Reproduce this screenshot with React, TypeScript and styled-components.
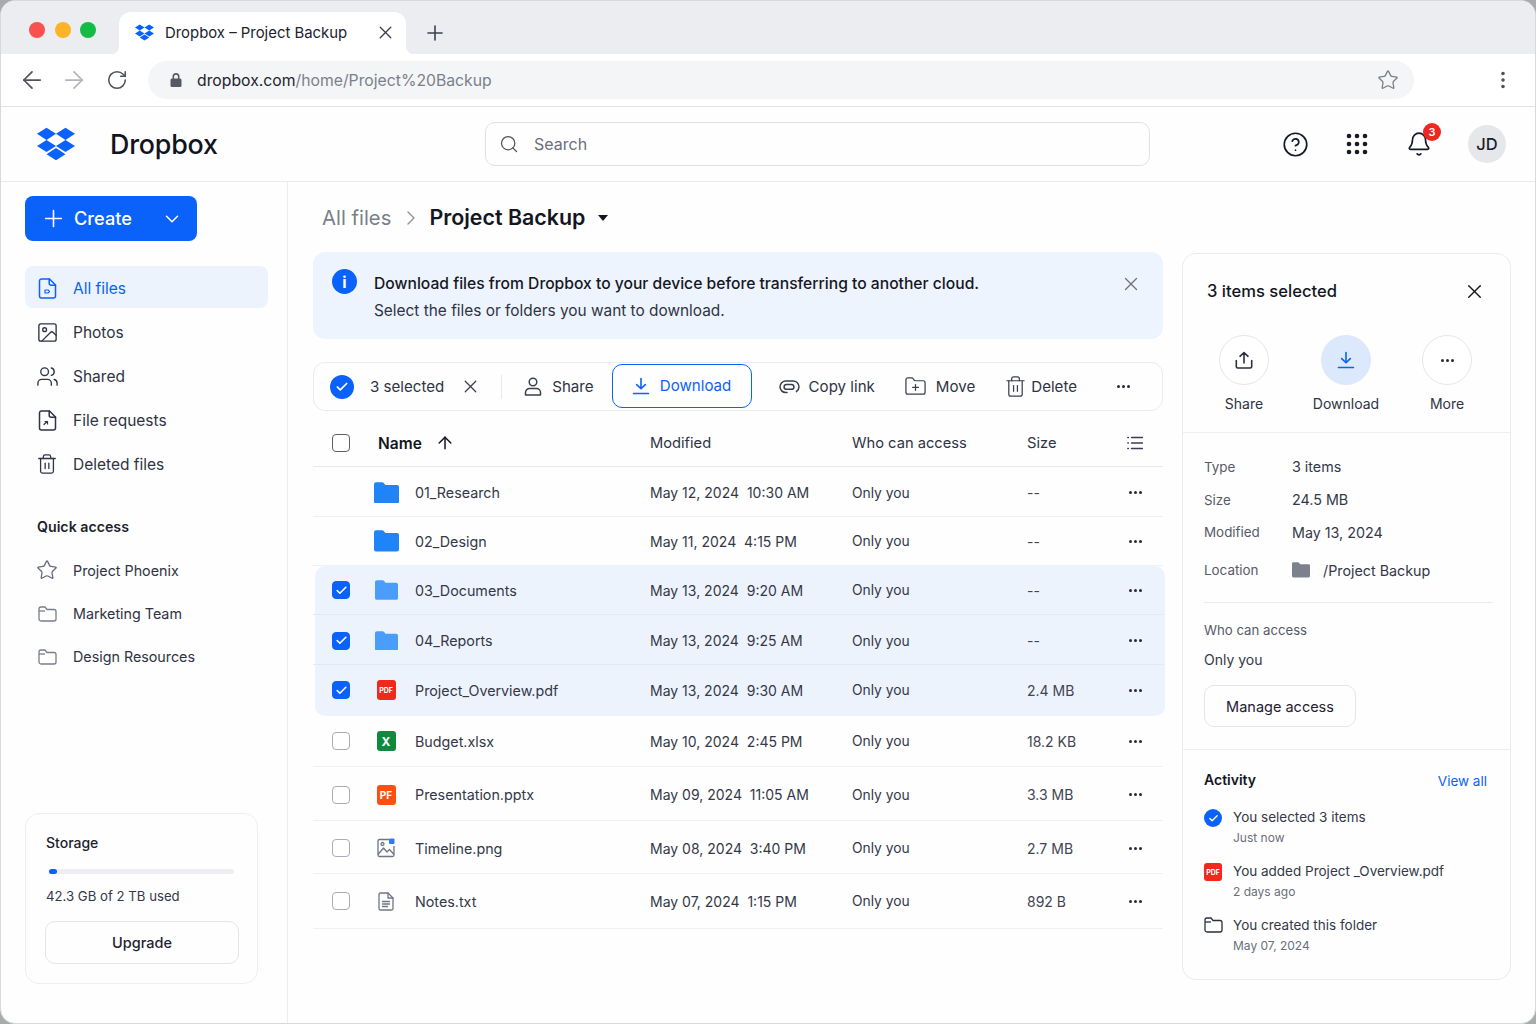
import React from 'react'
import styled, { createGlobalStyle } from 'styled-components'
import {
  ArrowLeft,
  ArrowRight,
  ArrowUp,
  Bell,
  Check,
  ChevronDown,
  ChevronRight,
  CircleHelp,
  FolderPlus,
  Image,
  Plus,
  RotateCw,
  Search,
  Star,
  Trash2,
  Users,
  X,
} from 'lucide-react'

const GlobalStyle = createGlobalStyle`
  html, body { margin: 0; padding: 0; background: #a9aaac; }
  * { box-sizing: border-box; }
  svg { flex: none; }
  body { font-family: Inter, "Liberation Sans", sans-serif; color: #2b2f3f; }
`

const Win = styled.div`
  width: 1536px;
  height: 1024px;
  background: #fefefe;
  border: 1px solid #d8d9dd;
  border-radius: 15px;
  overflow: hidden;
  display: flex;
  flex-direction: column;
`

const TabStrip = styled.div`
  height: 53px;
  flex: none;
  background: #ecedf0;
  display: flex;
  align-items: flex-end;
  padding-left: 28px;
`

const Lights = styled.div`
  display: flex;
  gap: 9.5px;
  align-self: flex-start;
  margin-top: 21px;
  width: 90px;
`

const Light = styled.span<{ $c: string }>`
  width: 16px;
  height: 16px;
  border-radius: 50%;
  background: ${p => p.$c};
`

const Tab = styled.div`
  position: relative;
  width: 287px;
  height: 42px;
  background: #fff;
  border-radius: 12px 12px 0 0;
  display: flex;
  align-items: center;
  padding: 0 10px 2px 16px;
  font-size: 14.9px;
  color: #20232e;
  &::before, &::after {
    content: '';
    position: absolute;
    bottom: 0;
    width: 8px;
    height: 8px;
  }
  &::before { left: -8px; background: radial-gradient(circle at 0 0, transparent 8px, #fff 8.5px); }
  &::after { right: -8px; background: radial-gradient(circle at 100% 0, transparent 8px, #fff 8.5px); }
`

const TabTitle = styled.span`
  margin-left: 11px;
  padding-top: 2px;
  flex: 1;
`

const NewTab = styled.div`
  margin: 0 0 9px 17px;
  display: flex;
  color: #3c404c;
`

const AddressRow = styled.div`
  height: 53px;
  flex: none;
  background: #fff;
  border-bottom: 1px solid #e2e3e7;
  display: flex;
  align-items: center;
  padding-left: 17px;
`

const NavGlyph = styled.div<{ $mr: number; $c?: string }>`
  display: flex;
  margin-right: ${p => p.$mr}px;
  color: ${p => p.$c ?? '#50535e'};
`

const AddressPill = styled.div`
  width: 1266px;
  height: 38px;
  flex: none;
  margin-right: 87px;
  border-radius: 19px;
  background: #f4f5f7;
  display: flex;
  align-items: center;
  padding: 0 15px 0 21px;
  font-size: 15.75px;
  color: #7b7f8b;
`

const Domain = styled.span`
  color: #1f2230;
  margin-left: 14px;
  padding-top: 1px;
`

const Path = styled.span`
  flex: 1;
  padding-top: 1px;
`

const AppHeader = styled.header`
  height: 75px;
  flex: none;
  border-bottom: 1px solid #e9eaed;
  display: flex;
  align-items: center;
  padding-left: 36px;
`

const Brand = styled.div`
  width: 448px;
  display: flex;
  align-items: center;
  gap: 35px;
  font-size: 26.8px;
  font-weight: 550;
  color: #11131d;
  letter-spacing: -0.2px;
`

const SearchBox = styled.div`
  width: 665px;
  height: 44px;
  flex: none;
  border: 1px solid #dfe1e7;
  border-radius: 10px;
  display: flex;
  align-items: center;
  gap: 15px;
  padding-left: 13px;
  font-size: 16px;
  color: #6a6e7a;
`

const HeaderTools = styled.div`
  display: flex;
  align-items: center;
  margin-left: 132px;
  color: #161927;
`

const HeaderIcon = styled.div<{ $mr: number }>`
  position: relative;
  display: flex;
  margin-right: ${p => p.$mr}px;
`

const Badge = styled.span`
  position: absolute;
  top: -8px;
  right: -9px;
  width: 18px;
  height: 18px;
  border-radius: 50%;
  background: #ee2722;
  color: #fff;
  font-size: 11px;
  font-weight: 600;
  display: flex;
  align-items: center;
  justify-content: center;
`

const Avatar = styled.div`
  width: 38px;
  height: 38px;
  border-radius: 50%;
  background: #e6e7eb;
  font-size: 16.5px;
  font-weight: 500;
  color: #1b1e2b;
  display: flex;
  align-items: center;
  justify-content: center;
`

const Body = styled.div`
  flex: 1;
  display: flex;
  min-height: 0;
`

const Sidebar = styled.aside`
  width: 287px;
  flex: none;
  border-right: 1px solid #ecedf0;
  padding: 14px 19px 39px 24px;
  display: flex;
  flex-direction: column;
`

const CreateButton = styled.div`
  width: 172px;
  height: 45px;
  background: #0a62fb;
  border-radius: 8px;
  color: #fff;
  font-size: 18.2px;
  font-weight: 500;
  display: flex;
  align-items: center;
  padding-left: 15px;
  margin-bottom: 25px;
`

const CreateLabel = styled.span`
  margin: 0 0 2px 7px;
  flex: 1;
`

const CreateCaret = styled.span`
  display: flex;
  margin-right: 14px;
`

const NavItem = styled.div<{ $active?: boolean; $h?: number; $pt?: number; $small?: boolean }>`
  height: ${p => p.$h ?? 44}px;
  padding: ${p => p.$pt ?? 0}px 0 0 12px;
  display: flex;
  align-items: center;
  gap: 16px;
  border-radius: 8px;
  font-size: ${p => (p.$small ? 14.3 : 15.5)}px;
  color: ${p => (p.$active ? '#0a62fb' : '#2f3343')};
  background: ${p => (p.$active ? '#edf3fd' : 'transparent')};
`

const NavList = styled.nav`
  display: flex;
  flex-direction: column;
`

const NavIcon = styled.span<{ $c?: string }>`
  width: 20px;
  display: flex;
  justify-content: center;
  color: ${p => p.$c ?? 'inherit'};
`

const SideTitle = styled.div`
  font-size: 14.2px;
  font-weight: 600;
  color: #1c1f2c;
  margin: 32px 0 13px 12px;
`

const StorageCard = styled.div`
  margin-top: auto;
  width: 233px;
  height: 171px;
  border: 1px solid #eceef1;
  border-radius: 14px;
  padding: 20px 19px 0 20px;
  display: flex;
  flex-direction: column;
`

const StorageTitle = styled.div`
  font-size: 14px;
  font-weight: 500;
  color: #1c1f2c;
`

const Track = styled.div`
  height: 5px;
  margin: 18px 4px 0 3px;
  border-radius: 3px;
  background: #eceef2;
`

const TrackFill = styled.div`
  height: 5px;
  border-radius: 3px;
  background: #0a62fb;
`

const StorageText = styled.div`
  font-size: 13.2px;
  color: #343847;
  margin-top: 14px;
`

const OutlineButton = styled.div<{ $w: number; $h: number; $weight?: number }>`
  width: ${p => p.$w}px;
  height: ${p => p.$h}px;
  border: 1px solid #e3e5ea;
  border-radius: 10px;
  display: flex;
  align-items: center;
  justify-content: center;
  font-size: 14.5px;
  font-weight: ${p => p.$weight ?? 400};
  color: #1f2230;
`

const UpgradeWrap = styled.div`
  margin: 17px 0 0 -1px;
`

const Main = styled.main`
  flex: 1;
  padding-left: 25px;
  display: flex;
  flex-direction: column;
`

const Crumbs = styled.div`
  height: 70px;
  flex: none;
  display: flex;
  align-items: center;
  padding: 0 0 0 9px;
`

const CrumbRoot = styled.span`
  font-size: 20.3px;
  color: #7a7e8a;
`

const CrumbSep = styled.span`
  display: flex;
  color: #8e919c;
  margin: 2px 6px 0 8px;
`

const CrumbCurrent = styled.span`
  font-size: 21.4px;
  font-weight: 600;
  color: #14161f;
`

const CrumbCaret = styled.span`
  width: 0;
  height: 0;
  margin: 2px 0 0 13px;
  border-left: 5px solid transparent;
  border-right: 5px solid transparent;
  border-top: 6px solid #14161f;
`

const Columns = styled.div`
  display: flex;
  align-items: flex-start;
  gap: 19px;
`

const Content = styled.section`
  width: 850px;
  flex: none;
`

const Banner = styled.div`
  height: 87px;
  background: #eef4fd;
  border-radius: 12px;
  display: flex;
  padding: 17px 21px 0 19px;
`

const InfoDot = styled.div`
  width: 25px;
  height: 25px;
  border-radius: 50%;
  background: #0a62fb;
  color: #fff;
  flex: none;
  font-size: 16px;
  font-weight: 700;
  display: flex;
  align-items: center;
  justify-content: center;
`

const BannerText = styled.div`
  flex: 1;
  margin-left: 17px;
  font-size: 15.4px;
  line-height: 27px;
  margin-top: 1px;
  color: #2f3343;
`

const BannerLead = styled.div`
  font-size: 15.66px;
  font-weight: 500;
  color: #151823;
`

const BannerClose = styled.div`
  display: flex;
  color: #6c707c;
  height: 22px;
  margin-top: 4px;
`

const Toolbar = styled.div`
  height: 49px;
  margin-top: 23px;
  border: 1px solid #e9ebee;
  border-radius: 12px;
  display: flex;
  align-items: center;
  padding-left: 16px;
  font-size: 15.1px;
  color: #2f3343;
`

const RoundCheck = styled.div<{ $size: number }>`
  width: ${p => p.$size}px;
  height: ${p => p.$size}px;
  flex: none;
  border-radius: 50%;
  background: #0a62fb;
  color: #fff;
  display: flex;
  align-items: center;
  justify-content: center;
`

const ToolText = styled.span<{ $ml: number }>`
  margin-left: ${p => p.$ml}px;
`

const ToolDivider = styled.span`
  width: 1px;
  height: 24px;
  background: #e6e8ec;
  margin: 0 22px 0 20px;
`

const ToolAction = styled.div<{ $ml?: number; $gap: number }>`
  display: flex;
  align-items: center;
  gap: ${p => p.$gap}px;
  margin-left: ${p => p.$ml ?? 0}px;
`

const ToolIcon = styled.span<{ $ml?: number }>`
  display: flex;
  color: #3b3f4d;
  margin-left: ${p => p.$ml ?? 0}px;
`

const DownloadAction = styled.div`
  width: 140px;
  height: 44px;
  margin: 0 0 2px 18px;
  border: 1.5px solid #0a62fb;
  border-radius: 10px;
  color: #0a62fb;
  display: flex;
  align-items: center;
  justify-content: center;
  gap: 10px;
`

const Dots = styled.span<{ $ml?: number; $c?: string }>`
  display: flex;
  gap: 2px;
  margin-left: ${p => p.$ml ?? 0}px;
  & > i {
    width: 3px;
    height: 3px;
    border-radius: 50%;
    background: ${p => p.$c ?? '#262a38'};
  }
`

const columns = '56px 46px 235px 202px 175px 90px 36px'

const HeadRow = styled.div`
  height: 47px;
  margin-top: 9px;
  display: grid;
  grid-template-columns: ${columns};
  align-items: center;
  border-bottom: 1px solid #e6e8ec;
  font-size: 14.7px;
  color: #2f3343;
`

const NameHead = styled.div`
  grid-column: 2 / 4;
  padding-left: 9px;
  display: flex;
  align-items: center;
  gap: 13px;
  font-weight: 600;
  font-size: 15.5px;
  color: #14161f;
`

const CheckCell = styled.div`
  display: flex;
  justify-content: center;
`

const CheckBox = styled.span<{ $on?: boolean; $dark?: boolean }>`
  width: 18px;
  height: 18px;
  border-radius: 4px;
  border: 1.5px solid ${p => (p.$on ? '#0a62fb' : p.$dark ? '#5b5f6c' : '#a9adb9')};
  background: ${p => (p.$on ? '#0a62fb' : '#fff')};
  color: #fff;
  display: flex;
  align-items: center;
  justify-content: center;
`

const SelectedGroup = styled.div`
  margin: 0 -2px 0 2px;
  background: #edf3fd;
  border-radius: 10px;
`

const Row = styled.div<{ $h: number; $nudge?: boolean; $selected?: boolean; $last?: boolean }>`
  height: ${p => p.$h}px;
  padding-top: ${p => (p.$nudge ? 2 : 0)}px;
  display: grid;
  grid-template-columns: ${columns};
  align-items: center;
  font-size: 14.3px;
  color: #343847;
  border-bottom: 1px solid ${p => (p.$selected ? (p.$last ? 'transparent' : '#e0e9f8') : '#eff0f3')};
  margin: ${p => (p.$selected ? '0 2px 0 -2px' : '0')};
`

const IconCell = styled.div`
  display: flex;
  justify-content: center;
  padding-right: 12px;
`

const FileBadge = styled.span<{ $bg: string; $size: number; $w?: number; $h?: number }>`
  width: ${p => p.$w ?? 19}px;
  height: ${p => p.$h ?? 20}px;
  border-radius: 3px;
  background: ${p => p.$bg};
  color: #fff;
  font-size: ${p => p.$size}px;
  font-weight: 700;
  flex: none;
  display: flex;
  align-items: center;
  justify-content: center;
`

const DateCell = styled.div`
  font-size: 14px;
  white-space: pre;
`

const AccessCell = styled.div`
  font-size: 13.8px;
`

const SizeCell = styled.div`
  font-size: 14px;
  color: #414553;
`

const RowDots = styled.div`
  display: flex;
  justify-content: center;
`

const Panel = styled.aside`
  width: 329px;
  height: 727px;
  flex: none;
  margin-top: 1px;
  border: 1px solid #e9ebee;
  border-radius: 14px;
  font-size: 14px;
  color: #343847;
`

const PanelHead = styled.div`
  height: 76px;
  display: flex;
  align-items: center;
  justify-content: space-between;
  padding: 0 24px 2px 24px;
  font-size: 16.6px;
  font-weight: 500;
  color: #14161f;
  margin-bottom: 5px;
`

const QuickActions = styled.div`
  height: 98px;
  display: grid;
  grid-template-columns: 112px 92px 110px;
  padding-left: 5px;
  border-bottom: 1px solid #eceef1;
`

const QuickAction = styled.div`
  display: flex;
  flex-direction: column;
  align-items: center;
  gap: 10px;
  color: #2f3343;
`

const QuickCircle = styled.div<{ $on?: boolean }>`
  width: 50px;
  height: 50px;
  border-radius: 50%;
  border: 1px solid ${p => (p.$on ? '#dce8fb' : '#e4e6ea')};
  background: ${p => (p.$on ? '#dce8fb' : '#fff')};
  color: ${p => (p.$on ? '#0a62fb' : '#2b2f3f')};
  display: flex;
  align-items: center;
  justify-content: center;
`

const Details = styled.div`
  padding: 17px 17px 0 21px;
`

const DetailRow = styled.div<{ $h: number }>`
  height: ${p => p.$h}px;
  display: flex;
  align-items: center;
`

const DetailLabel = styled.span`
  width: 88px;
  font-size: 13.4px;
  color: #565a67;
`

const DetailValue = styled.span`
  font-size: 14.3px;
  color: #343847;
  display: flex;
  align-items: center;
  gap: 13px;
`

const InnerRule = styled.div`
  height: 1px;
  background: #e9ebee;
  margin-top: 10px;
`

const AccessLabel = styled.div`
  margin-top: 19px;
  font-size: 13.2px;
  color: #565a67;
`

const AccessValue = styled.div`
  margin-top: 13px;
  margin-bottom: 17px;
`

const Activity = styled.div`
  margin-top: 22px;
  border-top: 1px solid #eceef1;
  padding: 21px 23px 0 21px;
`

const ActivityHead = styled.div`
  display: flex;
  justify-content: space-between;
  align-items: flex-start;
  height: 37px;
  font-weight: 600;
  color: #14161f;
`

const ViewAll = styled.span`
  font-size: 13.5px;
  font-weight: 400;
  color: #0a62fb;
  margin-top: 2px;
`

const ActivityItem = styled.div`
  height: 54px;
  display: flex;
  gap: 11px;
  font-size: 13.5px;
`

const ActivityIcon = styled.div`
  width: 18px;
  flex: none;
  display: flex;
  padding-top: 1px;
  color: #2b2f3f;
`

const ActivityTitle = styled.div`
  line-height: 18px;
`

const ActivityTime = styled.div`
  font-size: 12px;
  color: #6a6e7a;
  line-height: 18px;
  margin-top: 3px;
`

const DropboxLogo = ({ size }: { size: number }) => (
  <svg width={size} height={size} viewBox="0 0 24 24" fill="#0a62fb">
    <path d="M6 1.8 0 5.6l6 3.85 6-3.85L6 1.8zM18 1.8l-6 3.8 6 3.85 6-3.85-6-3.8zM0 13.3l6 3.8 6-3.8-6-3.85-6 3.85zM18 9.45l-6 3.85 6 3.8 6-3.8-6-3.85zM6 18.4l6 3.8 6-3.8-6-3.85-6 3.85z" />
  </svg>
)

const LockIcon = () => (
  <svg width="14" height="16" viewBox="0 0 14 16" fill="#565964">
    <path d="M3.5 7V4.6a3.5 3.5 0 0 1 7 0V7h-1.6V4.6a1.9 1.9 0 0 0-3.8 0V7z" />
    <rect x="1.5" y="6.5" width="11" height="8.5" rx="1.5" />
  </svg>
)

const AppsGrid = () => (
  <svg width="22" height="22" viewBox="0 0 22 22" fill="#161927">
    {[3, 11, 19].flatMap(y =>
      [3, 11, 19].map(x => <circle key={`${x}-${y}`} cx={x} cy={y} r="2.3" />),
    )}
  </svg>
)

const Kebab = () => (
  <svg width="4" height="18" viewBox="0 0 4 18" fill="#50535e">
    <circle cx="2" cy="2.5" r="1.8" />
    <circle cx="2" cy="9" r="1.8" />
    <circle cx="2" cy="15.5" r="1.8" />
  </svg>
)

const FileGlyph = ({ children }: { children?: React.ReactNode }) => (
  <svg width="19" height="21" viewBox="0 0 19 21" fill="none" stroke="currentColor" strokeWidth="1.5" strokeLinejoin="round" strokeLinecap="round">
    <path d="M3.5 1h8l6 6v11a2 2 0 0 1-2 2h-12a2 2 0 0 1-2-2V3a2 2 0 0 1 2-2z" />
    <path d="M11.2 1v4.2a2 2 0 0 0 2 2h4.3" />
    {children}
  </svg>
)

const FolderOutline = ({ color }: { color: string }) => (
  <svg width="19" height="16" viewBox="0 0 19 16" fill="none" stroke={color} strokeWidth="1.3" strokeLinejoin="round">
    <path d="M1 3a2 2 0 0 1 2-2h4l2 2.5h7a2 2 0 0 1 2 2V13a2 2 0 0 1-2 2H3a2 2 0 0 1-2-2z" />
    <path d="M1 5h6" />
  </svg>
)

const FolderFill = ({ color, w }: { color: string; w: number }) => (
  <svg width={w} height={w * 0.86} viewBox="0 0 25 21.5" fill={color}>
    <path d="M0 2.2A2 2 0 0 1 2 .2h6.2a2 2 0 0 1 1.5.7L11.4 3H23a2 2 0 0 1 2 2v14.5a2 2 0 0 1-2 2H2a2 2 0 0 1-2-2z" />
  </svg>
)

const PersonIcon = () => (
  <svg width="18" height="19" viewBox="0 0 18 19" fill="none" stroke="currentColor" strokeWidth="1.5">
    <circle cx="9" cy="5" r="3.8" />
    <path d="M1.5 17.9v-2.4a4 4 0 0 1 4-4h7a4 4 0 0 1 4 4v2.4z" strokeLinejoin="round" />
  </svg>
)

const DownloadIcon = ({ size = 18 }: { size?: number }) => (
  <svg width={size} height={size} viewBox="0 0 18 18" fill="none" stroke="currentColor" strokeWidth="1.6" strokeLinecap="round" strokeLinejoin="round">
    <path d="M9 1.5v10M4.7 7.6 9 11.8l4.3-4.2M1.5 16.5h15" />
  </svg>
)

const LinkIcon = () => (
  <svg width="21" height="14" viewBox="0 0 21 14" fill="none" stroke="currentColor" strokeWidth="1.5" strokeLinecap="round">
    <path d="M8 12.6H6.8a5.8 5.8 0 0 1 0-11.6h7.4a5.8 5.8 0 0 1 5.8 5.8c0 2-1 3.7-2.6 4.8" />
    <path d="M12.5 4.5h-5a2.4 2.4 0 0 0 0 4.8h5a2.4 2.4 0 0 0 0-4.8z" />
  </svg>
)

const UploadIcon = () => (
  <svg width="18" height="18" viewBox="0 0 18 18" fill="none" stroke="currentColor" strokeWidth="1.6" strokeLinecap="round" strokeLinejoin="round">
    <path d="M9 12V1.5M5 5.3 9 1.5l4 3.8M1.3 9.5v6a1.5 1.5 0 0 0 1.5 1.5h12.4a1.5 1.5 0 0 0 1.5-1.5v-6" />
  </svg>
)

const ColumnsIcon = () => (
  <svg width="16" height="14" viewBox="0 0 16 14" fill="none" stroke="#3b3f4d" strokeWidth="1.4" strokeLinecap="round">
    <path d="M4.5 1.5H15.5M4.5 7H15.5M4.5 12.5H15.5M.8 1.5h.6M.8 7h.6M.8 12.5h.6" />
  </svg>
)

const PictureIcon = () => (
  <svg width="18" height="20" viewBox="0 0 18 20" fill="none" stroke="#6f7585" strokeWidth="1.3" strokeLinejoin="round">
    <path d="M12 1.5H2.5A1.5 1.5 0 0 0 1 3v14a1.5 1.5 0 0 0 1.5 1.5h13A1.5 1.5 0 0 0 17 17V8" />
    <path d="M1 16.5 6.5 10l3.5 4 2.5-2.5 4.5 5" />
    <circle cx="5.5" cy="6" r="1.5" />
    <rect x="12" y="0.5" width="5.5" height="5.5" rx="1" fill="#2f7df6" stroke="none" />
  </svg>
)

const NotesIcon = () => (
  <svg width="16" height="19" viewBox="0 0 16 19" fill="none" stroke="#6f7585" strokeWidth="1.3" strokeLinejoin="round" strokeLinecap="round">
    <path d="M2.5 1H10l5 5v10.5a1.5 1.5 0 0 1-1.5 1.5h-11A1.5 1.5 0 0 1 1 16.5v-14A1.5 1.5 0 0 1 2.5 1z" />
    <path d="M10 1v5h5M4.5 9.5h7M4.5 12h7M4.5 14.5h5" />
  </svg>
)

type FileKind = 'folder' | 'pdf' | 'xlsx' | 'pptx' | 'png' | 'txt'

const rowIcon = (kind: FileKind, selected?: boolean) => {
  if (kind === 'folder') return <FolderFill color={selected ? '#4b9dfb' : '#1f84f8'} w={selected ? 23 : 25} />
  if (kind === 'pdf') return <FileBadge $bg="#f0291c" $size={7}>PDF</FileBadge>
  if (kind === 'xlsx') return <FileBadge $bg="#0e8a3e" $size={12}>X</FileBadge>
  if (kind === 'pptx') return <FileBadge $bg="#fb5012" $size={10}>PF</FileBadge>
  if (kind === 'png') return <PictureIcon />
  return <NotesIcon />
}

type FileRow = {
  name: string
  kind: FileKind
  modified: string
  size: string
  h: number
  check?: boolean
  nudge?: boolean
}

const plainTop: FileRow[] = [
  { name: '01_Research', kind: 'folder', modified: 'May 12, 2024  10:30 AM', size: '--', h: 50, nudge: true },
  { name: '02_Design', kind: 'folder', modified: 'May 11, 2024  4:15 PM', size: '--', h: 49 },
]

const selectedRows: FileRow[] = [
  { name: '03_Documents', kind: 'folder', modified: 'May 13, 2024  9:20 AM', size: '--', h: 49 },
  { name: '04_Reports', kind: 'folder', modified: 'May 13, 2024  9:25 AM', size: '--', h: 50, nudge: true },
  { name: 'Project_Overview.pdf', kind: 'pdf', modified: 'May 13, 2024  9:30 AM', size: '2.4 MB', h: 51 },
]

const plainBottom: FileRow[] = [
  { name: 'Budget.xlsx', kind: 'xlsx', modified: 'May 10, 2024  2:45 PM', size: '18.2 KB', h: 51, check: true },
  { name: 'Presentation.pptx', kind: 'pptx', modified: 'May 09, 2024  11:05 AM', size: '3.3 MB', h: 54, check: true, nudge: true },
  { name: 'Timeline.png', kind: 'png', modified: 'May 08, 2024  3:40 PM', size: '2.7 MB', h: 53, check: true, nudge: true },
  { name: 'Notes.txt', kind: 'txt', modified: 'May 07, 2024  1:15 PM', size: '892 B', h: 55, check: true },
]

const ThreeDots = ({ c, ml }: { c?: string; ml?: number }) => (
  <Dots $c={c} $ml={ml}>
    <i />
    <i />
    <i />
  </Dots>
)

const FileRowView = ({ row, selected, last }: { row: FileRow; selected?: boolean; last?: boolean }) => (
  <Row $h={row.h} $nudge={row.nudge} $selected={selected} $last={last}>
    <CheckCell>
      {selected ? (
        <CheckBox $on>
          <Check size={13} strokeWidth={3} />
        </CheckBox>
      ) : row.check ? (
        <CheckBox />
      ) : null}
    </CheckCell>
    <IconCell>{rowIcon(row.kind, selected)}</IconCell>
    <div>{row.name}</div>
    <DateCell>{row.modified}</DateCell>
    <AccessCell>Only you</AccessCell>
    <SizeCell>{row.size}</SizeCell>
    <RowDots>
      <ThreeDots />
    </RowDots>
  </Row>
)

export default function App() {
  return (
    <>
      <GlobalStyle />
      <Win>
        <TabStrip>
          <Lights>
            <Light $c="#f95050" />
            <Light $c="#fdb325" />
            <Light $c="#14bc45" />
          </Lights>
          <Tab>
            <DropboxLogo size={19} />
            <TabTitle>Dropbox – Project Backup</TabTitle>
            <X size={21} color="#3c404c" strokeWidth={1.6} />
          </Tab>
          <NewTab>
            <Plus size={24} strokeWidth={1.6} />
          </NewTab>
        </TabStrip>
        <AddressRow>
          <NavGlyph $mr={14}>
            <ArrowLeft size={28} strokeWidth={1.5} />
          </NavGlyph>
          <NavGlyph $mr={18} $c="#b4b6be">
            <ArrowRight size={28} strokeWidth={1.5} />
          </NavGlyph>
          <NavGlyph $mr={20}>
            <RotateCw size={22} strokeWidth={1.7} />
          </NavGlyph>
          <AddressPill>
            <LockIcon />
            <Domain>dropbox.com</Domain>
            <Path>/home/Project%20Backup</Path>
            <Star size={22} color="#7b7f8b" strokeWidth={1.4} />
          </AddressPill>
          <Kebab />
        </AddressRow>
        <AppHeader>
          <Brand>
            <DropboxLogo size={38} />
            Dropbox
          </Brand>
          <SearchBox>
            <Search size={20} color="#50535e" strokeWidth={1.5} />
            Search
          </SearchBox>
          <HeaderTools>
            <HeaderIcon $mr={37}>
              <CircleHelp size={27} strokeWidth={1.5} />
            </HeaderIcon>
            <HeaderIcon $mr={38}>
              <AppsGrid />
            </HeaderIcon>
            <HeaderIcon $mr={36}>
              <Bell size={26} strokeWidth={1.5} />
              <Badge>3</Badge>
            </HeaderIcon>
            <Avatar>JD</Avatar>
          </HeaderTools>
        </AppHeader>
        <Body>
          <Sidebar>
            <CreateButton>
              <Plus size={27} strokeWidth={1.4} />
              <CreateLabel>Create</CreateLabel>
              <CreateCaret>
                <ChevronDown size={22} strokeWidth={1.7} />
              </CreateCaret>
            </CreateButton>
            <NavList>
              <NavItem $active $h={42} $pt={2}>
                <NavIcon>
                  <FileGlyph>
                    <path d="M7 12h3l1.5 1.5L10 15H7z" strokeWidth="1.2" />
                  </FileGlyph>
                </NavIcon>
                All files
              </NavItem>
              <NavItem $h={46} $pt={2}>
                <NavIcon>
                  <Image size={23} strokeWidth={1.4} />
                </NavIcon>
                Photos
              </NavItem>
              <NavItem>
                <NavIcon>
                  <Users size={23} strokeWidth={1.4} />
                </NavIcon>
                Shared
              </NavItem>
              <NavItem>
                <NavIcon>
                  <FileGlyph>
                    <path d="M6 14.5 9 11.5M7 11.5h2.5V14" strokeWidth="1.2" />
                  </FileGlyph>
                </NavIcon>
                File requests
              </NavItem>
              <NavItem>
                <NavIcon>
                  <Trash2 size={22} strokeWidth={1.4} />
                </NavIcon>
                Deleted files
              </NavItem>
            </NavList>
            <SideTitle>Quick access</SideTitle>
            <NavList>
              <NavItem $small>
                <NavIcon $c="#676b78">
                  <Star size={22} strokeWidth={1.4} />
                </NavIcon>
                Project Phoenix
              </NavItem>
              <NavItem $small $h={43}>
                <NavIcon>
                  <FolderOutline color="#7a7e8a" />
                </NavIcon>
                Marketing Team
              </NavItem>
              <NavItem $small $h={43}>
                <NavIcon>
                  <FolderOutline color="#7a7e8a" />
                </NavIcon>
                Design Resources
              </NavItem>
            </NavList>
            <StorageCard>
              <StorageTitle>Storage</StorageTitle>
              <Track>
                <TrackFill style={{ width: `${(8 / 185) * 100}%` }} />
              </Track>
              <StorageText>42.3 GB of 2 TB used</StorageText>
              <UpgradeWrap>
                <OutlineButton $w={194} $h={43} $weight={500}>
                  Upgrade
                </OutlineButton>
              </UpgradeWrap>
            </StorageCard>
          </Sidebar>
          <Main>
            <Crumbs>
              <CrumbRoot>All files</CrumbRoot>
              <CrumbSep>
                <ChevronRight size={24} strokeWidth={1.3} />
              </CrumbSep>
              <CrumbCurrent>Project Backup</CrumbCurrent>
              <CrumbCaret />
            </Crumbs>
            <Columns>
              <Content>
                <Banner>
                  <InfoDot>i</InfoDot>
                  <BannerText>
                    <BannerLead>Download files from Dropbox to your device before transferring to another cloud.</BannerLead>
                    Select the files or folders you want to download.
                  </BannerText>
                  <BannerClose>
                    <X size={22} strokeWidth={1.4} />
                  </BannerClose>
                </Banner>
                <Toolbar>
                  <RoundCheck $size={24}>
                    <Check size={14} strokeWidth={3} />
                  </RoundCheck>
                  <ToolText $ml={16}>3 selected</ToolText>
                  <ToolIcon $ml={16}>
                    <X size={21} strokeWidth={1.4} />
                  </ToolIcon>
                  <ToolDivider />
                  <ToolAction $gap={10}>
                    <ToolIcon>
                      <PersonIcon />
                    </ToolIcon>
                    Share
                  </ToolAction>
                  <DownloadAction>
                    <DownloadIcon />
                    Download
                  </DownloadAction>
                  <ToolAction $ml={27} $gap={9}>
                    <ToolIcon>
                      <LinkIcon />
                    </ToolIcon>
                    Copy link
                  </ToolAction>
                  <ToolAction $ml={29} $gap={9}>
                    <ToolIcon>
                      <FolderPlus size={23} strokeWidth={1.3} />
                    </ToolIcon>
                    Move
                  </ToolAction>
                  <ToolAction $ml={29} $gap={4}>
                    <ToolIcon>
                      <Trash2 size={23} strokeWidth={1.3} />
                    </ToolIcon>
                    Delete
                  </ToolAction>
                  <ThreeDots ml={40} />
                </Toolbar>
                <HeadRow>
                  <CheckCell>
                    <CheckBox $dark />
                  </CheckCell>
                  <NameHead>
                    Name
                    <ArrowUp size={20} strokeWidth={1.8} />
                  </NameHead>
                  <div>Modified</div>
                  <div>Who can access</div>
                  <div>Size</div>
                  <RowDots>
                    <ColumnsIcon />
                  </RowDots>
                </HeadRow>
                {plainTop.map(row => (
                  <FileRowView key={row.name} row={row} />
                ))}
                <SelectedGroup>
                  {selectedRows.map((row, i) => (
                    <FileRowView key={row.name} row={row} selected last={i === selectedRows.length - 1} />
                  ))}
                </SelectedGroup>
                {plainBottom.map(row => (
                  <FileRowView key={row.name} row={row} />
                ))}
              </Content>
              <Panel>
                <PanelHead>
                  3 items selected
                  <X size={23} strokeWidth={1.5} />
                </PanelHead>
                <QuickActions>
                  <QuickAction>
                    <QuickCircle>
                      <UploadIcon />
                    </QuickCircle>
                    Share
                  </QuickAction>
                  <QuickAction>
                    <QuickCircle $on>
                      <DownloadIcon />
                    </QuickCircle>
                    Download
                  </QuickAction>
                  <QuickAction>
                    <QuickCircle>
                      <ThreeDots />
                    </QuickCircle>
                    More
                  </QuickAction>
                </QuickActions>
                <Details>
                  <DetailRow $h={33}>
                    <DetailLabel>Type</DetailLabel>
                    <DetailValue>3 items</DetailValue>
                  </DetailRow>
                  <DetailRow $h={33}>
                    <DetailLabel>Size</DetailLabel>
                    <DetailValue>24.5 MB</DetailValue>
                  </DetailRow>
                  <DetailRow $h={32}>
                    <DetailLabel>Modified</DetailLabel>
                    <DetailValue>May 13, 2024</DetailValue>
                  </DetailRow>
                  <DetailRow $h={44}>
                    <DetailLabel>Location</DetailLabel>
                    <DetailValue>
                      <FolderFill color="#7d818d" w={18} />
                      /Project Backup
                    </DetailValue>
                  </DetailRow>
                  <InnerRule />
                  <AccessLabel>Who can access</AccessLabel>
                  <AccessValue>Only you</AccessValue>
                  <OutlineButton $w={152} $h={42}>
                    Manage access
                  </OutlineButton>
                </Details>
                <Activity>
                  <ActivityHead>
                    Activity
                    <ViewAll>View all</ViewAll>
                  </ActivityHead>
                  <ActivityItem>
                    <ActivityIcon>
                      <RoundCheck $size={18}>
                        <Check size={11} strokeWidth={3} />
                      </RoundCheck>
                    </ActivityIcon>
                    <div>
                      <ActivityTitle>You selected 3 items</ActivityTitle>
                      <ActivityTime>Just now</ActivityTime>
                    </div>
                  </ActivityItem>
                  <ActivityItem>
                    <ActivityIcon>
                      <FileBadge $bg="#f0291c" $size={7} $w={18} $h={18}>
                        PDF
                      </FileBadge>
                    </ActivityIcon>
                    <div>
                      <ActivityTitle>You added Project _Overview.pdf</ActivityTitle>
                      <ActivityTime>2 days ago</ActivityTime>
                    </div>
                  </ActivityItem>
                  <ActivityItem>
                    <ActivityIcon>
                      <FolderOutline color="#2b2f3f" />
                    </ActivityIcon>
                    <div>
                      <ActivityTitle>You created this folder</ActivityTitle>
                      <ActivityTime>May 07, 2024</ActivityTime>
                    </div>
                  </ActivityItem>
                </Activity>
              </Panel>
            </Columns>
          </Main>
        </Body>
      </Win>
    </>
  )
}
